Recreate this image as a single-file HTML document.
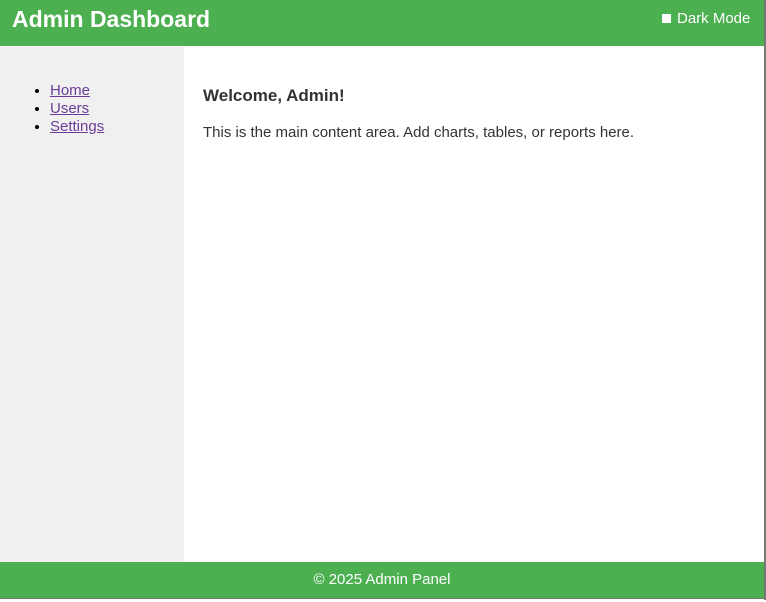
<!DOCTYPE html>
<html><head><style>
*{margin:0;padding:0;box-sizing:border-box}
body{width:766px;height:602px;background:#fff;font-family:"Liberation Sans",sans-serif;position:relative;overflow:hidden}
.hdr{position:absolute;left:0;top:0;width:764px;height:46px;background:#4caf50;color:#fff}
.hdr h1{position:absolute;left:12px;top:6px;font-size:23px;font-weight:bold}
.dm{position:absolute;left:662px;top:10px;font-size:15px}
.dm span{display:inline-block;width:9px;height:9px;background:#fff;margin-right:6px;vertical-align:0}
.side{position:absolute;left:0;top:47px;width:184px;height:515px;background:#f0f0f0}
.side ul{position:absolute;left:50px;top:35px;font-size:15px;line-height:18px}
.side a{color:#6a3d9a;text-decoration:underline}
.main{position:absolute;left:203px;top:86px;color:#333}
.main h2{font-size:17px;margin-bottom:18px}
.main p{font-size:15px}
.ftr{position:absolute;left:0;top:562px;width:764px;height:36px;background:#4caf50;color:#fff;font-size:15px;text-align:center;line-height:36px}
.rb{position:absolute;left:764px;top:0;width:2px;height:600px;background:#777}
.bb{position:absolute;left:0;top:598px;width:766px;height:1px;background:#777}
</style></head><body>
<div class="hdr"><h1>Admin Dashboard</h1><div class="dm"><span></span>Dark Mode</div></div>
<div class="side"><ul><li><a>Home</a></li><li><a>Users</a></li><li><a>Settings</a></li></ul></div>
<div class="main"><h2>Welcome, Admin!</h2><p>This is the main content area. Add charts, tables, or reports here.</p></div>
<div class="ftr">© 2025 Admin Panel</div>
<div class="rb"></div><div class="bb"></div>
</body></html>
